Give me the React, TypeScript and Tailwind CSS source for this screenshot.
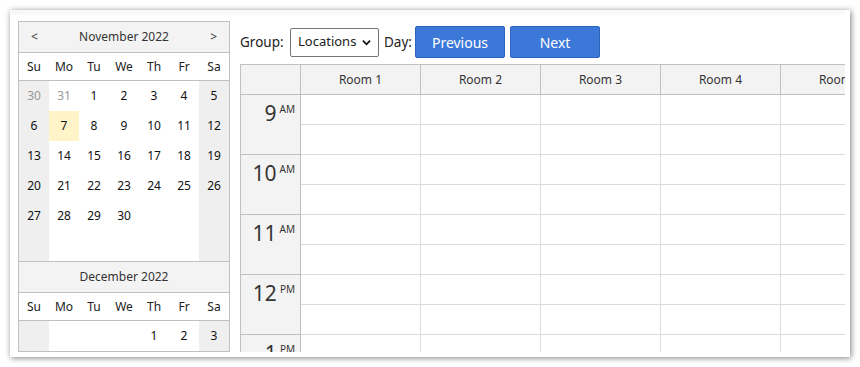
import React from 'react';

const font = { fontFamily: '"Noto Sans", "Open Sans", Arial, sans-serif' };

type Cell = { d: number | null; other?: boolean; today?: boolean };

const november: Cell[][] = [
  [{ d: 30, other: true }, { d: 31, other: true }, { d: 1 }, { d: 2 }, { d: 3 }, { d: 4 }, { d: 5 }],
  [{ d: 6 }, { d: 7, today: true }, { d: 8 }, { d: 9 }, { d: 10 }, { d: 11 }, { d: 12 }],
  [{ d: 13 }, { d: 14 }, { d: 15 }, { d: 16 }, { d: 17 }, { d: 18 }, { d: 19 }],
  [{ d: 20 }, { d: 21 }, { d: 22 }, { d: 23 }, { d: 24 }, { d: 25 }, { d: 26 }],
  [{ d: 27 }, { d: 28 }, { d: 29 }, { d: 30 }, { d: null }, { d: null }, { d: null }],
  [{ d: null }, { d: null }, { d: null }, { d: null }, { d: null }, { d: null }, { d: null }],
];

const december: Cell[][] = [
  [{ d: null }, { d: null }, { d: null }, { d: null }, { d: 1 }, { d: 2 }, { d: 3 }],
];

const dayNames = ['Su', 'Mo', 'Tu', 'We', 'Th', 'Fr', 'Sa'];
const rooms = ['Room 1', 'Room 2', 'Room 3', 'Room 4', 'Room 5'];
const hours = [
  { h: '9', p: 'AM' },
  { h: '10', p: 'AM' },
  { h: '11', p: 'AM' },
  { h: '12', p: 'PM' },
  { h: '1', p: 'PM' },
];

const Month = ({ title, rows, nav, first }: { title: string; rows: Cell[][]; nav?: boolean; first?: boolean }) => (
  <div className={first ? '' : 'border-t border-[#c0c0c0]'}>
    <div className="h-[31px] bg-[#f3f3f3] flex items-center justify-between px-[12px] text-[12px] text-[#333] border-b border-[#c0c0c0]">
      <span className="w-[10px]">{nav ? '<' : ''}</span>
      <span>{title}</span>
      <span className="w-[10px] text-right">{nav ? '>' : ''}</span>
    </div>
    <div className="grid grid-cols-7 h-[28px] border-b border-[#c0c0c0] bg-white">
      {dayNames.map((n) => (
        <div key={n} className="flex items-center justify-center text-[12px] text-[#222]">
          {n}
        </div>
      ))}
    </div>
    {rows.map((row, i) => (
      <div key={i} className="grid grid-cols-7 h-[30px]">
        {row.map((c, j) => {
          const weekend = j === 0 || j === 6;
          const bg = c.today ? 'bg-[#fff3c8]' : weekend ? 'bg-[#efefef]' : 'bg-white';
          return (
            <div
              key={j}
              className={`flex items-center justify-center text-[12px] ${bg} ${c.other ? 'text-[#999]' : 'text-[#111]'}`}
            >
              {c.d ?? ''}
            </div>
          );
        })}
      </div>
    ))}
  </div>
);

export default function App() {
  return (
    <div className="w-[860px] h-[367px] bg-white pl-[10px] pt-[10px]" style={font}>
      <div className="w-[840px] h-[347px] bg-white pr-[5px] pb-[5px] shadow-[1px_1px_6px_rgba(0,0,0,0.5)]">
        <div className="w-[835px] h-[342px] overflow-hidden flex bg-[linear-gradient(#f9f9f9_0,#f9f9f9_5px,#fff_5px)]">
          <div className="pl-[8px] pt-[11px] shrink-0">
            <div className="w-[212px] border border-[#c0c0c0]">
              <Month title="November 2022" rows={november} nav first />
              <Month title="December 2022" rows={december} />
            </div>
          </div>

          <div className="ml-[10px] pt-[16px] flex-1 min-w-0">
            <div className="flex items-center h-[32px] text-[13.5px] text-[#222]">
              <span className="w-[50px]">Group:</span>
              <div className="w-[89px] h-[29px] border border-[#767676] rounded-[2px] flex items-center justify-between pl-[7px] pr-[7px] bg-white text-[13px]">
                <span>Locations</span>
                <svg width="9" height="7" viewBox="0 0 10 7">
                  <polyline points="1,1.5 5,5.5 9,1.5" fill="none" stroke="#111" strokeWidth="2" />
                </svg>
              </div>
              <span className="ml-[5px] w-[31px]">Day:</span>
              <button className="w-[90px] h-[32px] bg-[#3c78d8] border border-[#2f64bd] rounded-[2px] text-white text-[14px]">
                Previous
              </button>
              <button className="ml-[5px] w-[90px] h-[32px] bg-[#3c78d8] border border-[#2f64bd] rounded-[2px] text-white text-[14px]">
                Next
              </button>
            </div>

            <div className="mt-[6px] w-[662px] border-t border-l border-[#c0c0c0]">
              <div className="flex h-[30px] bg-[#f3f3f3] border-b border-[#c0c0c0]">
                <div className="w-[60px] shrink-0 border-r border-[#c0c0c0]" />
                {rooms.map((r) => (
                  <div
                    key={r}
                    className="w-[120px] shrink-0 border-r border-[#c0c0c0] flex items-center justify-center pt-[1px] text-[12px] text-[#333]"
                  >
                    {r}
                  </div>
                ))}
              </div>
              {hours.map((h) => (
                <div key={h.h} className="flex h-[60px]">
                  <div className="w-[60px] shrink-0 bg-[#f3f3f3] border-r border-b border-[#c0c0c0] flex justify-end pr-[5px] pt-[7px] text-[#333]">
                    <span className="text-[21px] leading-[22px]">{h.h}</span>
                    <span className="text-[10px] leading-[12px] ml-[3px] mt-[1px]">{h.p}</span>
                  </div>
                  {rooms.map((r) => (
                    <div key={r} className="w-[120px] shrink-0 flex flex-col border-r border-[#dcdcdc]">
                      <div className="h-[30px] border-b border-[#dcdcdc]" />
                      <div className="h-[30px] border-b border-[#dcdcdc]" />
                    </div>
                  ))}
                </div>
              ))}
            </div>
          </div>
        </div>
      </div>
    </div>
  );
}
